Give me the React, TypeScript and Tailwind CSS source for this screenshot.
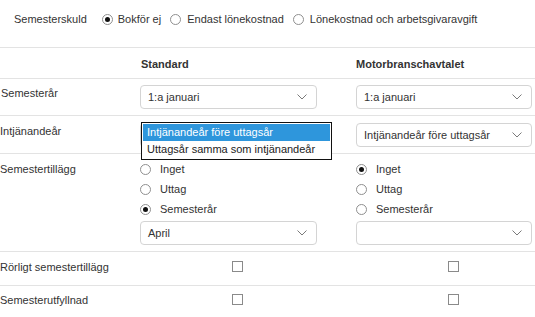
import React from 'react';

const Radio: React.FC<{ checked?: boolean }> = ({ checked }) => (
  <span className="inline-flex h-[11px] w-[11px] shrink-0 items-center justify-center rounded-full border border-[#8f8f8f] bg-white">
    {checked && <span className="h-[5px] w-[5px] rounded-full bg-[#111]" />}
  </span>
);

const Checkbox: React.FC = () => (
  <span className="block h-[11px] w-[11px] border border-[#8a8a8a] bg-white" />
);

const Chevron: React.FC = () => (
  <svg width="10" height="6" viewBox="0 0 10 6" className="shrink-0">
    <polyline points="0.5,0.5 5,5 9.5,0.5" fill="none" stroke="#7a7a7a" strokeWidth="1" />
  </svg>
);

const Select: React.FC<{ value?: string; width: string }> = ({ value, width }) => (
  <div className={`flex h-[24px] ${width} items-center justify-between rounded-[4px] border border-[#d4d4d4] bg-white pl-[7px] pr-[9px]`}>
    <span>{value}</span>
    <Chevron />
  </div>
);

const RadioLine: React.FC<{ label: string; checked?: boolean }> = ({ label, checked }) => (
  <div className="flex h-[20px] items-center gap-[9px]">
    <Radio checked={checked} />
    <span>{label}</span>
  </div>
);

const row = 'grid grid-cols-[140px_216px_194px] border-b border-[#e3e3e3]';

export default function App() {
  return (
    <div className="h-[317px] w-[535px] overflow-hidden bg-white text-[11px] leading-[14px] text-[#333]" style={{ fontFamily: '"Liberation Sans", Arial, sans-serif' }}>
      <div className="flex h-[48px] items-start border-b border-[#e3e3e3] pt-[12px]">
        <span className="ml-[14px]">Semesterskuld</span>
        <div className="ml-[15px] flex items-center gap-[5px]">
          <Radio checked />
          <span>Bokför ej</span>
        </div>
        <div className="ml-[9px] flex items-center gap-[6px]">
          <Radio />
          <span>Endast lönekostnad</span>
        </div>
        <div className="ml-[9px] flex items-center gap-[6px]">
          <Radio />
          <span>Lönekostnad och arbetsgivaravgift</span>
        </div>
      </div>

      <div className={`${row} h-[31px] pt-[9px] font-bold`}>
        <span />
        <span className="pl-[1px]">Standard</span>
        <span>Motorbranschavtalet</span>
      </div>

      <div className={`${row} h-[37px]`}>
        <span className="pt-[7px] pl-[1px]">Semesterår</span>
        <div className="pt-[6px]">
          <Select value="1:a januari" width="w-[177px]" />
        </div>
        <div className="pt-[6px]">
          <Select value="1:a januari" width="w-[176px]" />
        </div>
      </div>

      <div className={`${row} h-[38px]`}>
        <span className="pt-[8px]">Intjänandeår</span>
        <div className="relative pt-[7px]">
          <Select width="w-[177px]" />
          <div className="absolute left-[1px] top-[6px] z-10 w-[191px] border border-[#111] bg-white p-[1px]">
            <div className="h-[17px] bg-[#2e96dc] pl-[4px] leading-[17px] text-white">Intjänandeår före uttagsår</div>
            <div className="h-[17px] pl-[4px] leading-[17px] text-[#222]">Uttagsår samma som intjänandeår</div>
          </div>
        </div>
        <div className="pt-[7px]">
          <Select value="Intjänandeår före uttagsår" width="w-[176px]" />
        </div>
      </div>

      <div className={`${row} h-[98px]`}>
        <span className="pt-[8px]">Semestertillägg</span>
        <div className="pt-[5px]">
          <RadioLine label="Inget" />
          <RadioLine label="Uttag" />
          <RadioLine label="Semesterår" checked />
          <div className="mt-[2px]">
            <Select value="April" width="w-[177px]" />
          </div>
        </div>
        <div className="pt-[5px]">
          <RadioLine label="Inget" checked />
          <RadioLine label="Uttag" />
          <RadioLine label="Semesterår" />
          <div className="mt-[2px]">
            <Select width="w-[176px]" />
          </div>
        </div>
      </div>

      <div className={`${row} h-[34px]`}>
        <span className="pt-[8px]">Rörligt semestertillägg</span>
        <div className="flex w-[194px] justify-center pt-[9px]">
          <Checkbox />
        </div>
        <div className="flex w-[194px] justify-center pt-[9px]">
          <Checkbox />
        </div>
      </div>

      <div className="grid h-[34px] grid-cols-[140px_216px_194px]">
        <span className="pt-[7px]">Semesterutfyllnad</span>
        <div className="flex w-[194px] justify-center pt-[8px]">
          <Checkbox />
        </div>
        <div className="flex w-[194px] justify-center pt-[8px]">
          <Checkbox />
        </div>
      </div>
    </div>
  );
}
